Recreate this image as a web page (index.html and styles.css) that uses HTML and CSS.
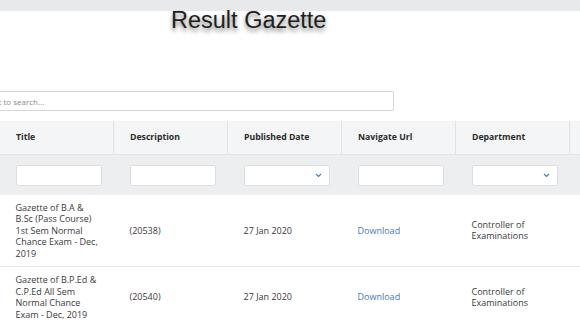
FILE: index.html
```
<!DOCTYPE html>
<html>
<head>
<meta charset="utf-8">
<link rel="stylesheet" href="styles.css">
</head>
<body>
<div class="topbar"></div>
<h1 class="page-title">Result Gazette</h1>
<div class="search-row">
  <input class="search" type="text" placeholder="Enter text to search...">
</div>
<div class="grid-wrap">
  <table class="grid">
    <colgroup>
      <col class="c"><col class="c"><col class="c"><col class="c"><col class="c"><col class="c">
    </colgroup>
    <thead>
      <tr class="head">
        <th>Title</th>
        <th>Description</th>
        <th>Published Date</th>
        <th>Navigate Url</th>
        <th>Department</th>
        <th></th>
      </tr>
      <tr class="filters">
        <td><div class="box"></div></td>
        <td><div class="box"></div></td>
        <td><div class="box select"><svg width="7" height="5" viewBox="0 0 7 5"><path d="M1 1 L3.5 3.5 L6 1" fill="none" stroke="#4f7cc2" stroke-width="1.2"/></svg></div></td>
        <td><div class="box"></div></td>
        <td><div class="box select"><svg width="7" height="5" viewBox="0 0 7 5"><path d="M1 1 L3.5 3.5 L6 1" fill="none" stroke="#4f7cc2" stroke-width="1.2"/></svg></div></td>
        <td></td>
      </tr>
    </thead>
    <tbody>
      <tr class="row">
        <td>Gazette of B.A &amp; B.Sc (Pass Course) 1st Sem Normal Chance Exam - Dec, 2019</td>
        <td>(20538)</td>
        <td>27 Jan 2020</td>
        <td><a class="link" href="#">Download</a></td>
        <td>Controller of Examinations</td>
        <td></td>
      </tr>
      <tr class="row">
        <td>Gazette of B.P.Ed &amp; C.P.Ed All Sem Normal Chance Exam - Dec, 2019</td>
        <td>(20540)</td>
        <td>27 Jan 2020</td>
        <td><a class="link" href="#">Download</a></td>
        <td>Controller of Examinations</td>
        <td></td>
      </tr>
    </tbody>
  </table>
</div>
</body>
</html>
```
FILE: styles.css
```
html, body {
  margin: 0;
  padding: 0;
  overflow: hidden;
  background: #ffffff;
}
body {
  font-family: "Open Sans", "Noto Sans", sans-serif;
  color: #333333;
  width: 580px;
  height: 326px;
}
.topbar {
  height: 11px;
  background: #e7e9eb;
}
.page-title {
  margin: -2px 0 0 0;
  padding-left: 171px;
  font-family: "Liberation Sans", Arial, sans-serif;
  font-weight: normal;
  font-size: 23.5px;
  line-height: 23px;
  color: #1e1e1e;
  text-shadow: 0 3px 4px rgba(0, 0, 0, 0.5);
}
.search-row {
  margin-top: 59px;
  height: 20px;
}
.search {
  box-sizing: border-box;
  margin: 0 0 0 -44px;
  width: 438px;
  height: 20px;
  border: 1px solid #d4d6d8;
  border-radius: 2px;
  padding: 0 8px;
  font-family: "Open Sans", sans-serif;
  font-size: 8px;
  color: #333;
  outline: none;
  display: block;
}
.search::placeholder {
  color: #8c8c8c;
}
.grid-wrap {
  margin-top: 10px;
  width: 580px;
  overflow: hidden;
}
.grid {
  border-collapse: collapse;
  table-layout: fixed;
  width: 684px;
  margin-left: -1px;
}
.grid col.c {
  width: 114px;
}
.head th {
  height: 33px;
  padding: 0 13px 0 16px;
  background: #f4f5f6;
  border-left: 1px solid #e1e3e5;
  border-bottom: 1px solid #e1e3e5;
  text-align: left;
  font-size: 8.7px;
  font-weight: 700;
  color: #2b2b2b;
  box-sizing: border-box;
}
.filters td {
  background: #eceef0;
  padding: 10px 12px 9px 16px;
}
.box {
  box-sizing: border-box;
  width: 86px;
  height: 21px;
  background: #ffffff;
  border: 1px solid #dcdee0;
  border-radius: 2px;
}
.select {
  display: flex;
  align-items: center;
  justify-content: flex-end;
  padding-right: 7px;
}
.row td {
  padding: 7px 13px 7px 16px;
  font-size: 9px;
  line-height: 11.5px;
  vertical-align: middle;
  color: #3a3a3a;
}
.row + .row td {
  border-top: 1px solid #e3e5e7;
}
.link {
  color: #4577bd;
  text-decoration: none;
}
```
